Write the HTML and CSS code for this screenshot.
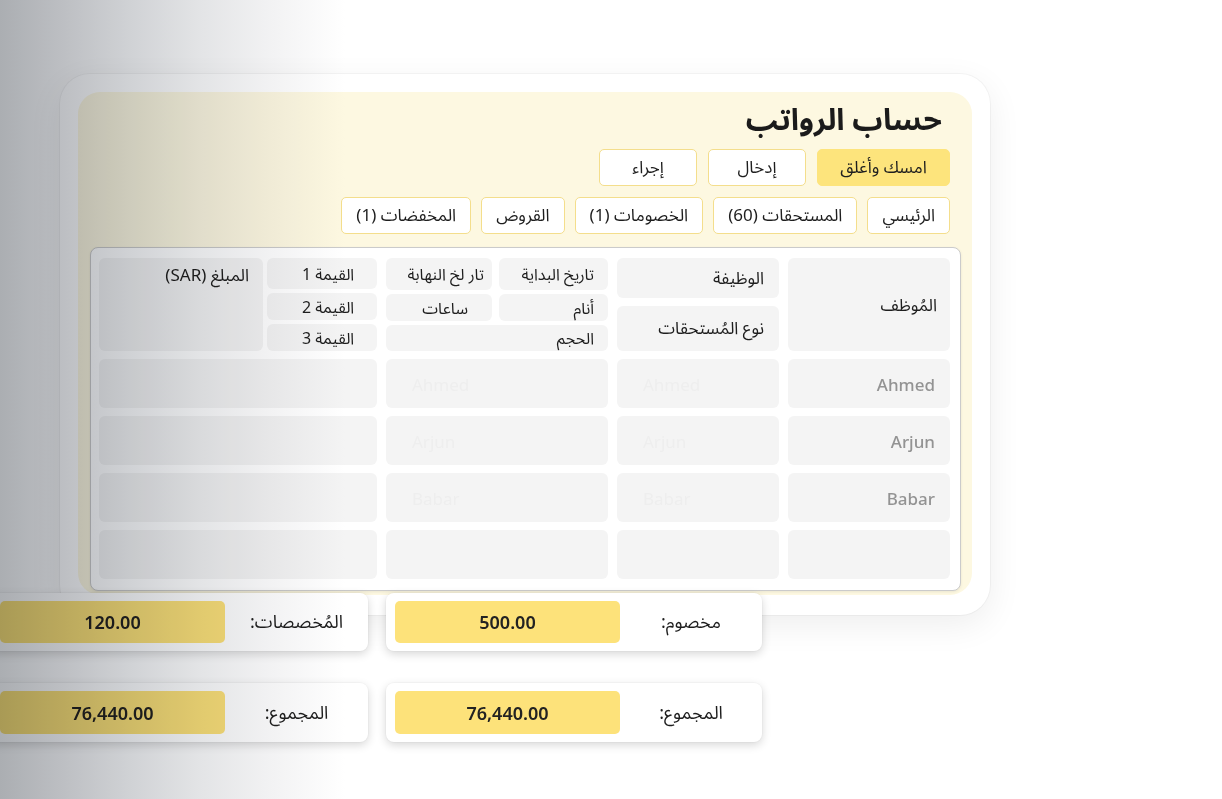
FILE: index.html
```html
<!DOCTYPE html>
<html lang="ar" dir="rtl">
<head>
<meta charset="utf-8">
<title>حساب الرواتب</title>
<link rel="stylesheet" href="styles.css">
</head>
<body>
<div class="stage">
  <div class="card">
    <div class="panel">
      <div class="head">
        <h1 class="title">حساب الرواتب</h1>
        <div class="actions">
          <button class="btn btn-primary">امسك وأغلق</button>
          <button class="btn btn-act">إدخال</button>
          <button class="btn btn-act">إجراء</button>
        </div>
        <div class="tabs">
          <button class="btn">الرئيسي</button>
          <button class="btn">المستحقات (60)</button>
          <button class="btn">الخصومات (1)</button>
          <button class="btn">القروض</button>
          <button class="btn">المخفضات (1)</button>
        </div>
      </div>
      <div class="table">
        <div class="cell h-emp">المُوظف</div>
        <div class="stack job">
          <div class="cell sub">الوظيفة</div>
          <div class="cell sub">نوع المُستحقات</div>
        </div>
        <div class="dates">
          <div class="cell sub">تاريخ البداية</div>
          <div class="cell sub sub-b">تار لخ النهابة</div>
          <div class="cell sub">أنام</div>
          <div class="cell sub sub-c">ساعات</div>
          <div class="cell sub span2">الحجم</div>
        </div>
        <div class="money">
          <div class="cell sub val">القيمة 1</div>
          <div class="cell amount">المبلغ (SAR)</div>
          <div class="cell sub val">القيمة 2</div>
          <div class="cell sub val">القيمة 3</div>
        </div>

        <div class="cell row name">Ahmed</div>
        <div class="cell row ghost">Ahmed</div>
        <div class="cell row ghost">Ahmed</div>
        <div class="cell row"></div>

        <div class="cell row name">Arjun</div>
        <div class="cell row ghost">Arjun</div>
        <div class="cell row ghost">Arjun</div>
        <div class="cell row"></div>

        <div class="cell row name">Babar</div>
        <div class="cell row ghost">Babar</div>
        <div class="cell row ghost">Babar</div>
        <div class="cell row"></div>

        <div class="cell row"></div>
        <div class="cell row"></div>
        <div class="cell row"></div>
        <div class="cell row"></div>
      </div>
    </div>
  </div>

  <div class="summary">
    <div class="sum-card pos-r1">
      <span class="sum-label">مخصوم:</span>
      <span class="sum-value">500.00</span>
    </div>
    <div class="sum-card pos-l1">
      <span class="sum-label">المُخصصات:</span>
      <span class="sum-value">120.00</span>
    </div>
    <div class="sum-card pos-r2">
      <span class="sum-label">المجموع:</span>
      <span class="sum-value">76,440.00</span>
    </div>
    <div class="sum-card pos-l2">
      <span class="sum-label">المجموع:</span>
      <span class="sum-value">76,440.00</span>
    </div>
  </div>

  <div class="fade"></div>
</div>
</body>
</html>
```

FILE: styles.css
```css
* { box-sizing: border-box; }

html, body {
  margin: 0;
  padding: 0;
  background: #ffffff;
}

body {
  width: 1222px;
  height: 799px;
  overflow: hidden;
  font-family: "Noto Sans Arabic", "Noto Sans", "DejaVu Sans", sans-serif;
  color: #1e1e1e;
}

.stage {
  position: relative;
  width: 1222px;
  height: 799px;
  padding-top: 74px;
  padding-right: 232px;
}

.card {
  width: 930px;
  height: 541px;
  background: #ffffff;
  border-radius: 30px;
  padding: 18px 18px 20px 18px;
  box-shadow: 0 0 0 1px rgba(0, 0, 0, 0.035), 0 10px 34px rgba(0, 0, 0, 0.07);
}

.panel {
  height: 100%;
  background: #fdf8e1;
  border-radius: 22px;
  padding: 8px 11px 4px 12px;
  display: flex;
  flex-direction: column;
}

.head {
  padding-right: 11px;
  display: flex;
  flex-direction: column;
  align-items: flex-start;
}

.title {
  margin: 0 8px 7px 0;
  font-size: 30px;
  line-height: 42px;
  font-weight: 700;
  color: #1b1b1b;
}

.actions, .tabs {
  display: flex;
  gap: 11px;
}

.tabs {
  gap: 10px;
  margin-top: 11px;
  margin-bottom: 13px;
}

.btn {
  height: 37px;
  padding: 2px 14px 0;
  border: 1px solid #f4de8c;
  border-radius: 5px;
  background: #ffffff;
  font-family: inherit;
  font-size: 17px;
  line-height: 1;
  color: #1e1e1e;
  white-space: nowrap;
}

.btn-act { min-width: 98px; }

.btn-primary {
  background: #fde47c;
  border-color: #fde47c;
  min-width: 133px;
}

.table {
  background: #ffffff;
  border: 1px solid #cbcbcb;
  border-radius: 8px;
  padding: 10px 10px 11px 7px;
  display: grid;
  grid-template-columns: 162px 162px 222px 278px;
  grid-template-rows: 93px repeat(4, 49px);
  column-gap: 9px;
  row-gap: 8px;
  box-shadow: 0 1px 3px rgba(0, 0, 0, 0.08);
}

.cell {
  background: #f4f4f4;
  border-radius: 6px;
  font-size: 17px;
  line-height: 1;
  display: flex;
  align-items: center;
  padding-right: 14px;
  padding-top: 2px;
  white-space: nowrap;
}

.h-emp { padding-right: 13px; padding-top: 4px; }

.stack {
  display: grid;
  grid-template-rows: 40px 45px;
  row-gap: 8px;
}

.job .sub { padding-right: 15px; }

.dates {
  display: grid;
  grid-template-columns: 109px 106px;
  grid-template-rows: 32px 27px 26px;
  gap: 4px 7px;
}

.dates .sub, .money .sub { font-size: 16px; }
.dates .sub { padding-right: 14px; }
.dates .sub-b { padding-right: 8px; }
.dates .sub-c { padding-right: 24px; }

.span2 { grid-column: 1 / span 2; }

.money {
  display: grid;
  grid-template-columns: 110px 164px;
  grid-template-rows: 31px 27px 27px;
  gap: 4px 4px;
}

.val {
  justify-content: center;
  padding-right: 0;
  padding-left: 12px;
}

.amount {
  grid-column: 2;
  grid-row: 1 / span 3;
  align-items: flex-start;
  padding-top: 10px;
  padding-right: 14px;
}

.row { height: 49px; }

.name {
  font-family: "Noto Sans", "Inter", sans-serif;
  font-weight: 500;
  font-size: 17px;
  color: #939393;
  padding-right: 15px;
}

.ghost {
  font-family: "Noto Sans", "Inter", sans-serif;
  font-size: 17px;
  color: #eeeeee;
  direction: ltr;
  justify-content: flex-start;
  padding-left: 26px;
  padding-right: 0;
}

.summary {
  position: absolute;
  top: 593px;
  left: -9px;
  width: 771px;
  display: grid;
  direction: ltr;
  grid-template-columns: 377px 376px;
  grid-template-rows: 58px 59px;
  column-gap: 18px;
  row-gap: 32px;
}

.sum-card {
  background: #ffffff;
  border-radius: 8px;
  box-shadow: 0 3px 10px rgba(0, 0, 0, 0.16), 0 0 0 1px rgba(0, 0, 0, 0.02);
  padding: 8px 0 8px 9px;
  display: flex;
  direction: ltr;
  align-items: stretch;
}

.pos-r1 { grid-column: 2; grid-row: 1; }
.pos-l1 { grid-column: 1; grid-row: 1; }
.pos-r2 { grid-column: 2; grid-row: 2; }
.pos-l2 { grid-column: 1; grid-row: 2; }

.sum-value {
  order: 1;
  width: 225px;
  background: #fde27a;
  border-radius: 5px;
  display: flex;
  align-items: center;
  justify-content: center;
  font-family: "Noto Sans", "Inter", sans-serif;
  font-weight: 600;
  font-size: 18px;
  color: #222222;
}

.sum-label {
  order: 2;
  flex: 1;
  display: flex;
  align-items: center;
  justify-content: center;
  font-size: 18px;
  color: #1e1e1e;
  direction: rtl;
}

.fade {
  position: absolute;
  top: 0;
  left: 0;
  width: 350px;
  height: 799px;
  pointer-events: none;
  mix-blend-mode: multiply;
  background: linear-gradient(to right, #abaeb2 0px, #bcbec2 60px, #d0d2d5 130px, #e3e4e6 200px, #f2f2f3 270px, #ffffff 345px);
}
```
